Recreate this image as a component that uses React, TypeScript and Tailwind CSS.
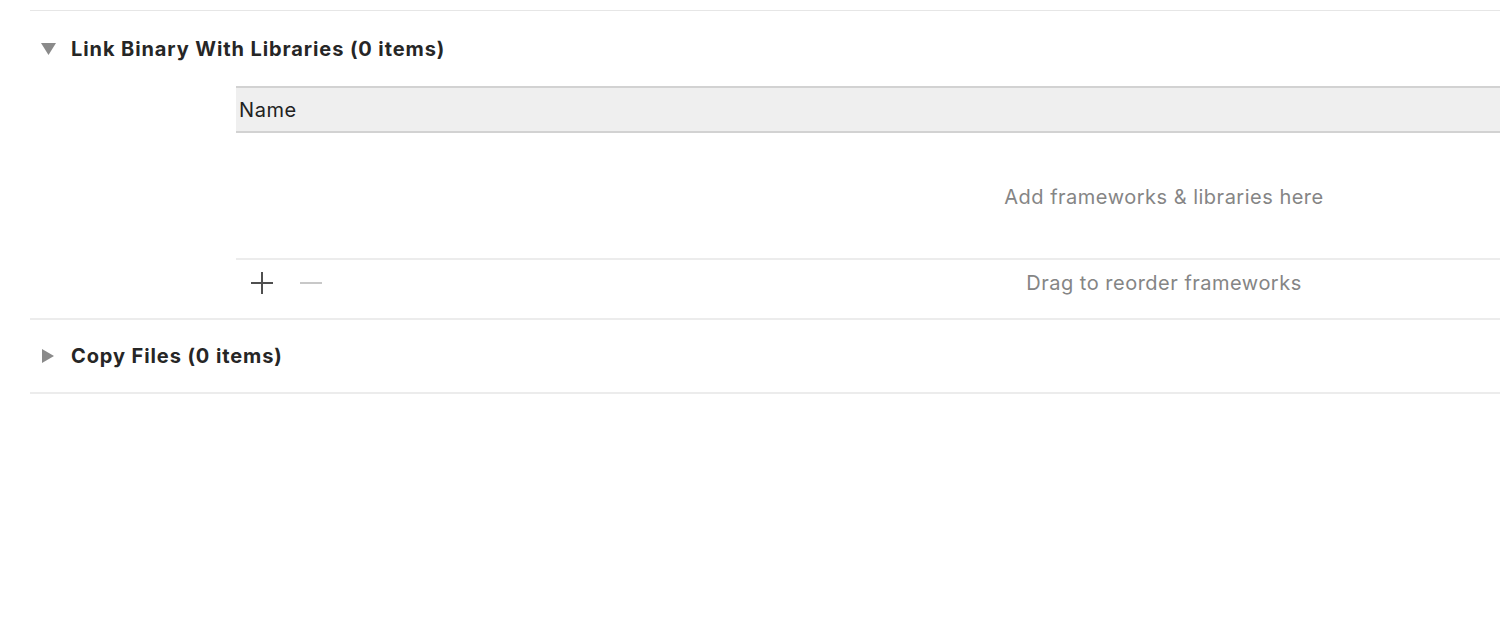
const font = { fontFamily: 'Inter, "Liberation Sans", Arial, sans-serif' };

function Triangle({ open }: { open: boolean }) {
  return (
    <svg width="17" height="14" viewBox="0 0 17 14" className="shrink-0">
      {open ? (
        <path d="M1 1 H16 L8.5 13 Z" fill="#8a8a8a" />
      ) : (
        <path d="M2 0 L14 7 L2 14 Z" fill="#8a8a8a" />
      )}
    </svg>
  );
}

function PhaseHeader({ title, open, h }: { title: string; open: boolean; h: string }) {
  return (
    <div className={`flex items-center pl-[10px] gap-[14px] ${h}`}>
      <Triangle open={open} />
      <span className="text-[20px] font-bold text-[#262626] tracking-[0.9px]">{title}</span>
    </div>
  );
}

export default function App() {
  return (
    <div className="w-[1500px] h-[624px] bg-white overflow-hidden" style={font}>
      <div className="h-[10px]" />
      <div className="ml-[30px] border-t border-[#e6e6e6]">
        <PhaseHeader title="Link Binary With Libraries (0 items)" open h="h-[75px]" />
        <div className="ml-[206px] w-[1856px]">
          <div className="h-[47px] bg-[#efefef] border-t-2 border-b-2 border-[#d2d2d2] flex items-center pl-[3px]">
            <span className="text-[20px] text-[#222] tracking-[0.6px]">Name</span>
          </div>
          <div className="h-[125px] flex items-center justify-center pt-[2px]">
            <span className="text-[20px] text-[#858585] tracking-[0.5px]">Add frameworks &amp; libraries here</span>
          </div>
          <div className="h-[60px] border-t-2 border-[#ececec] pb-[13px]">
            <div className="h-[45px] relative flex items-center justify-center">
              <div className="absolute left-[15px] top-0 h-full flex items-center gap-[27px]">
                <svg width="22" height="22" viewBox="0 0 22 22">
                  <path d="M11 0 V22 M0 11 H22" stroke="#4f4f4f" strokeWidth="2" />
                </svg>
                <svg width="22" height="22" viewBox="0 0 22 22">
                  <path d="M0 11 H22" stroke="#c8c8c8" strokeWidth="2" />
                </svg>
              </div>
              <span className="text-[20px] text-[#858585] tracking-[0.5px]">Drag to reorder frameworks</span>
            </div>
          </div>
        </div>
        <div className="border-t-2 border-[#ececec]">
          <PhaseHeader title="Copy Files (0 items)" open={false} h="h-[72px]" />
        </div>
        <div className="border-t-2 border-[#ececec]" />
      </div>
    </div>
  );
}
